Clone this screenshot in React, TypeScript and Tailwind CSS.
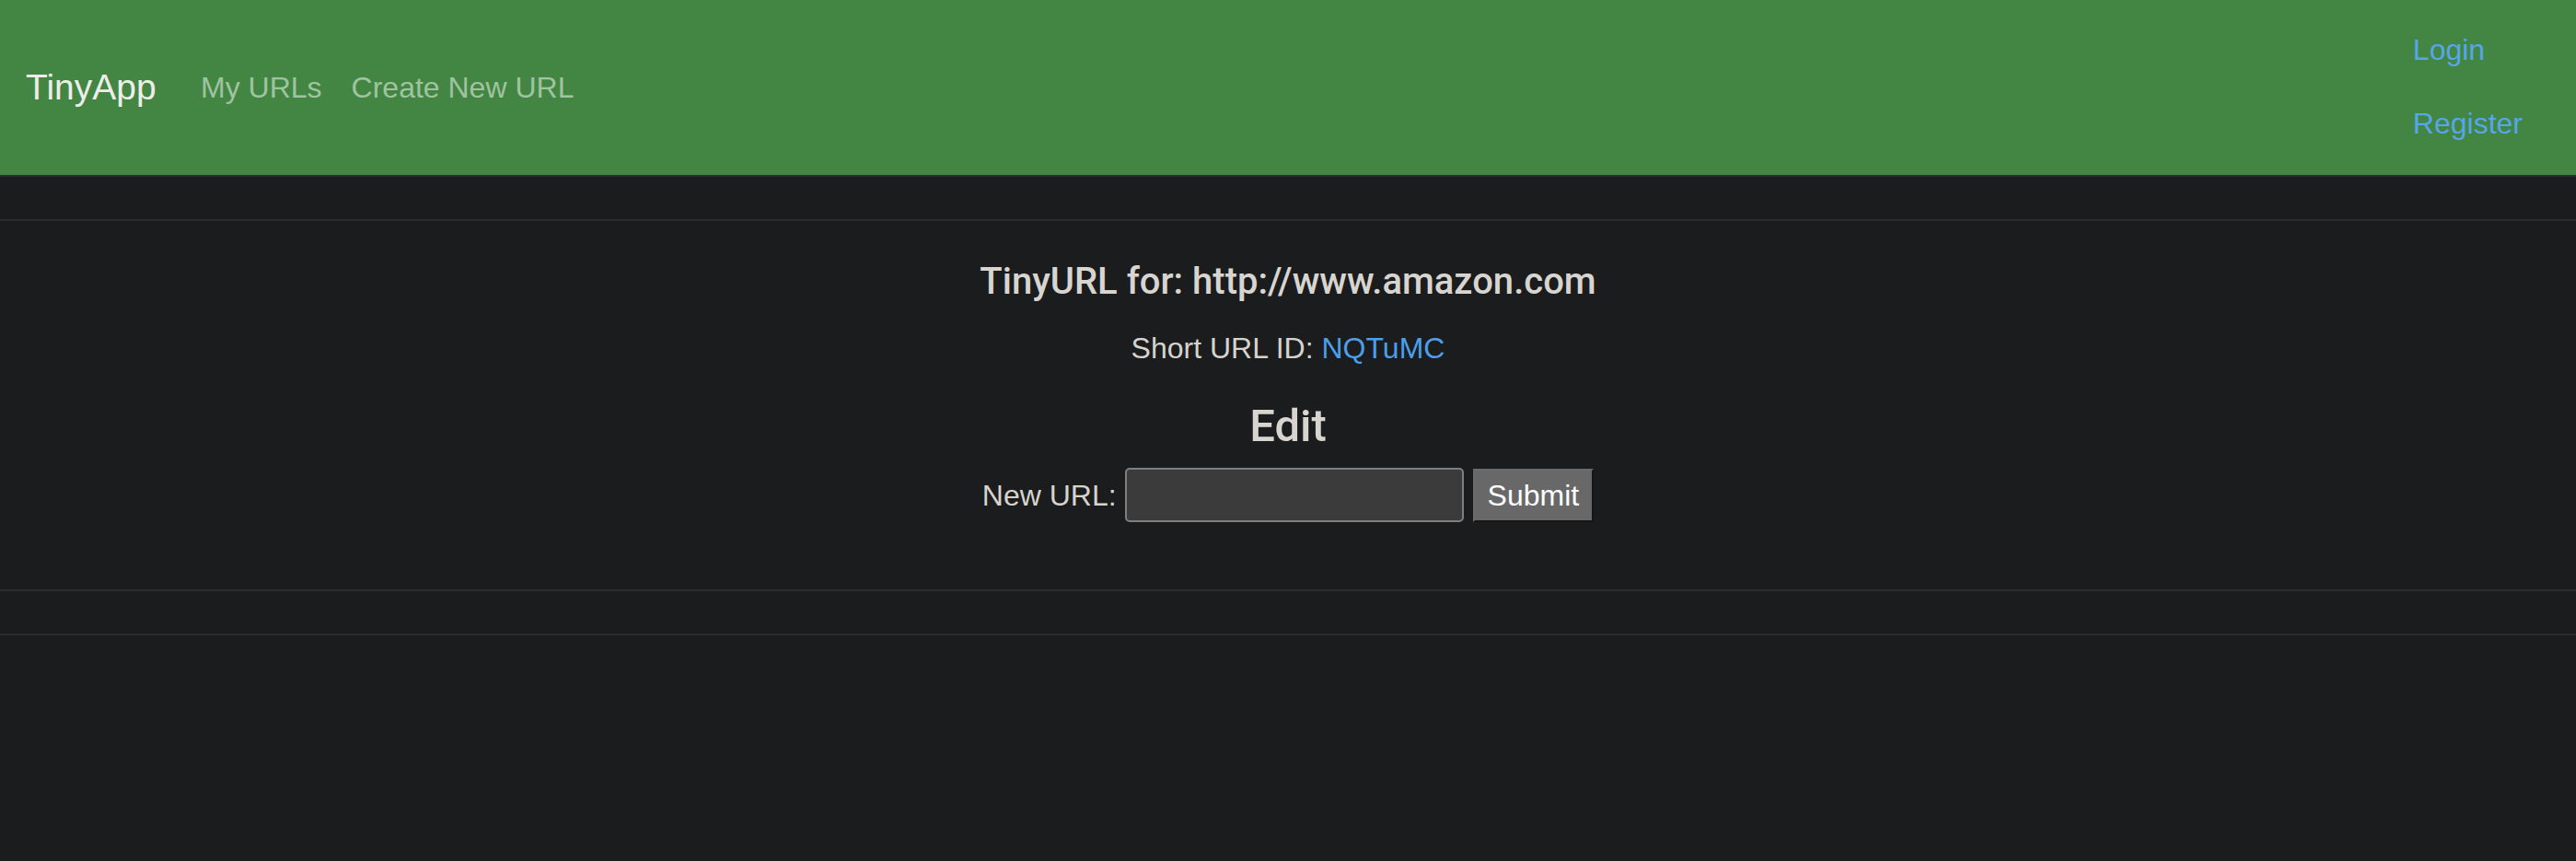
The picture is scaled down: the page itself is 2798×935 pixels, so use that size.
import React from "react";

export default function App() {
  return (
    <div
      className="min-h-[935px] bg-[#1b1c1e] text-[#d6d3cd]"
      style={{ fontFamily: '"Liberation Sans", Arial, sans-serif' }}
    >
      <nav className="flex h-[190px] items-start bg-[#438643] pl-[28px] pr-[58px]">
        <div className="flex h-full items-center">
          <span className="w-[190px] text-[39px] leading-[60px] text-[#eeede9]">TinyApp</span>
          <span className="text-[32px] leading-[48px] text-[#a0c3a0]">My URLs</span>
          <span className="ml-[32px] text-[32px] leading-[48px] text-[#a0c3a0]">Create New URL</span>
        </div>
        <div className="ml-auto flex flex-col pt-[14px]">
          <span className="flex h-[80px] items-center text-[32px] text-[#58a5e8]">Login</span>
          <span className="flex h-[80px] items-center text-[32px] text-[#58a5e8]">Register</span>
        </div>
      </nav>
      <div className="border-y-2 border-[#2a2c2d]">
        <div className="h-[48px] border-b-2 border-[#2a2c2d]" />
        <div className="flex flex-col items-center px-[40px] pt-[42px] pb-[73px] text-center">
          <h5 className="mb-[24px] font-['Roboto',sans-serif] text-[40px] font-medium leading-[48px] text-[#d8d5d0]">
            TinyURL for: http://www.amazon.com
          </h5>
          <p className="mb-[32px] text-[32px] leading-[48px]">
            Short URL ID: <span className="text-[#4c9ee9]">NQTuMC</span>
          </p>
          <h4 className="mb-[16px] font-['Roboto',sans-serif] text-[49px] font-medium leading-[58px] text-[#d8d5d0]">
            Edit
          </h4>
          <div className="flex items-center">
            <span className="text-[32px] leading-[48px]">New URL:</span>
            <input
              type="text"
              className="ml-[9px] h-[59px] w-[368px] rounded-[5px] border-2 border-[#7f7f7f] bg-[#3b3b3b] outline-none"
            />
            <button className="ml-[10px] h-[58px] border-2 border-[#6b6b6b] bg-[#686868] px-[14px] text-[32px] text-white [border-style:outset]">
              Submit
            </button>
          </div>
        </div>
        <div className="h-[48px] border-t-2 border-[#2a2c2d]" />
      </div>
    </div>
  );
}
